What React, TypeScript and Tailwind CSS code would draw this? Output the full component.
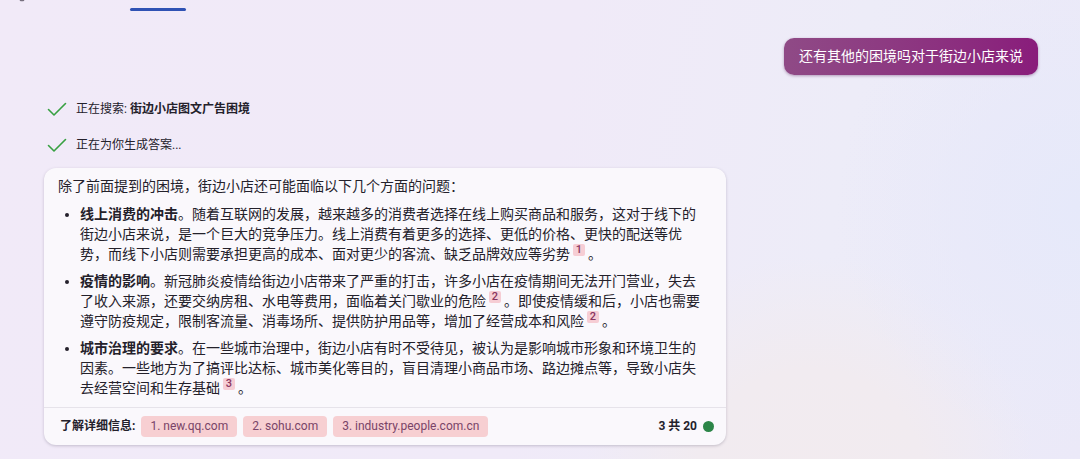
import type { ReactNode } from "react"

const sources = [
    { id: 1, host: "new.qq.com" },
    { id: 2, host: "sohu.com" },
    { id: 3, host: "industry.people.com.cn" },
]

const Cite = ({ n }: { n: number }) => {
    return (
        <sup className="static mx-[3px] align-super text-[11px] leading-[12px]">
            <a href={`#source-${n}`} className="inline-block h-[12px] w-[12px] rounded-xs bg-[#f6cdd4] text-center font-medium text-[#8a3560]">{n}</a>
        </sup>
    )
}

const Step = ({ children }: { children: ReactNode }) => {
    return (
        <div className="flex items-center gap-[9px] text-[12px] leading-[20px]">
            <svg width="20" height="16" viewBox="0 0 20 16" fill="none" stroke="#37a042" strokeWidth="1.6" strokeLinecap="round" strokeLinejoin="round">
                <path d="M1.5 8.5 7 14 18.5 2.5" />
            </svg>
            <p>{children}</p>
        </div>
    )
}

const Answer = () => {
    return (
        <article className="w-full max-w-[682px] rounded-xl bg-[#faf8fc] shadow-[0_1px_3px_rgba(60,50,80,0.25)]">
            <div className="border-b border-[#e6e3ea] pt-[8px] pr-[18px] pb-[9px] pl-[14px] text-[14px] leading-[20px]">
                <p>除了前面提到的困境，街边小店还可能面临以下几个方面的问题：</p>
                <ul className="mt-[8px] flex list-disc flex-col gap-[7px] pl-[22px]">
                    <li>
                        <strong>线上消费的冲击</strong>。随着互联网的发展，越来越多的消费者选择在线上购买商品和服务，这对于线下的街边小店来说，是一个巨大的竞争压力。线上消费有着更多的选择、更低的价格、更快的配送等优势，而线下小店则需要承担更高的成本、面对更少的客流、缺乏品牌效应等劣势<Cite n={1} />。
                    </li>
                    <li>
                        <strong>疫情的影响</strong>。新冠肺炎疫情给街边小店带来了严重的打击，许多小店在疫情期间无法开门营业，失去了收入来源，还要交纳房租、水电等费用，面临着关门歇业的危险<Cite n={2} />。即使疫情缓和后，小店也需要遵守防疫规定，限制客流量、消毒场所、提供防护用品等，增加了经营成本和风险<Cite n={2} />。
                    </li>
                    <li>
                        <strong>城市治理的要求</strong>。在一些城市治理中，街边小店有时不受待见，被认为是影响城市形象和环境卫生的因素。一些地方为了搞评比达标、城市美化等目的，盲目清理小商品市场、路边摊点等，导致小店失去经营空间和生存基础<Cite n={3} />。
                    </li>
                </ul>
            </div>

            <footer className="flex items-center gap-[6px] py-[8px] pr-[12px] pl-[16px] text-[12px] leading-[21px]">
                <span className="font-bold">了解详细信息:</span>
                {sources.map((s) => (
                    <a key={s.id} id={`source-${s.id}`} href={`https://${s.host}`} className="rounded-sm bg-[#f7cfd2] px-[9px] text-[#7a4468]">
                        {s.id}. {s.host}
                    </a>
                ))}
                <span className="ml-auto font-bold">3 共 20</span>
                <span className="h-[11px] w-[11px] rounded-full bg-[#2c8548]"></span>
            </footer>
        </article>
    )
}

const App = () => {
    return (
        <div className="min-h-screen bg-[radial-gradient(circle_at_100%_45%,#e6e9fa_0%,transparent_22%),radial-gradient(circle_at_75%_105%,#f2ebef_0%,#f1ebf0_12%,transparent_24%),linear-gradient(100deg,#f1eaf8_0%,#f0eaf8_50%,#edecf8_75%,#ebe9f8_100%)] pb-[14px] [font-family:Roboto,'Noto_Sans_CJK_SC',sans-serif] text-[#24212b]">
            <header className="flex h-[11px] items-end pl-[18px]">
                <svg className="self-start" width="8" height="2" viewBox="0 0 8 2" fill="none" stroke="#77707f" strokeWidth="1.5">
                    <path d="M2 0Q4 1.2 6 0" />
                </svg>
                <div className="ml-[104px] h-[3px] w-[56px] rounded-full bg-[#2f52b4]"></div>
            </header>

            <main className="flex flex-col pt-[27px] pr-[42px] pl-[44px]">
                <div className="self-end rounded-[10px] bg-linear-to-r from-[#8f4a86] to-[#891c7b] px-[15px] py-[8px] text-[14px] leading-[21px] text-white shadow-[0_1px_3px_rgba(90,30,90,0.4)]">
                    还有其他的困境吗对于街边小店来说
                </div>

                <div className="mt-[24px] mb-[13px] flex flex-col gap-[16px] pl-[3px]">
                    <Step>正在搜索: <strong>街边小店图文广告困境</strong></Step>
                    <Step>正在为你生成答案...</Step>
                </div>

                <Answer />
            </main>
        </div>
    )
}

export default App
